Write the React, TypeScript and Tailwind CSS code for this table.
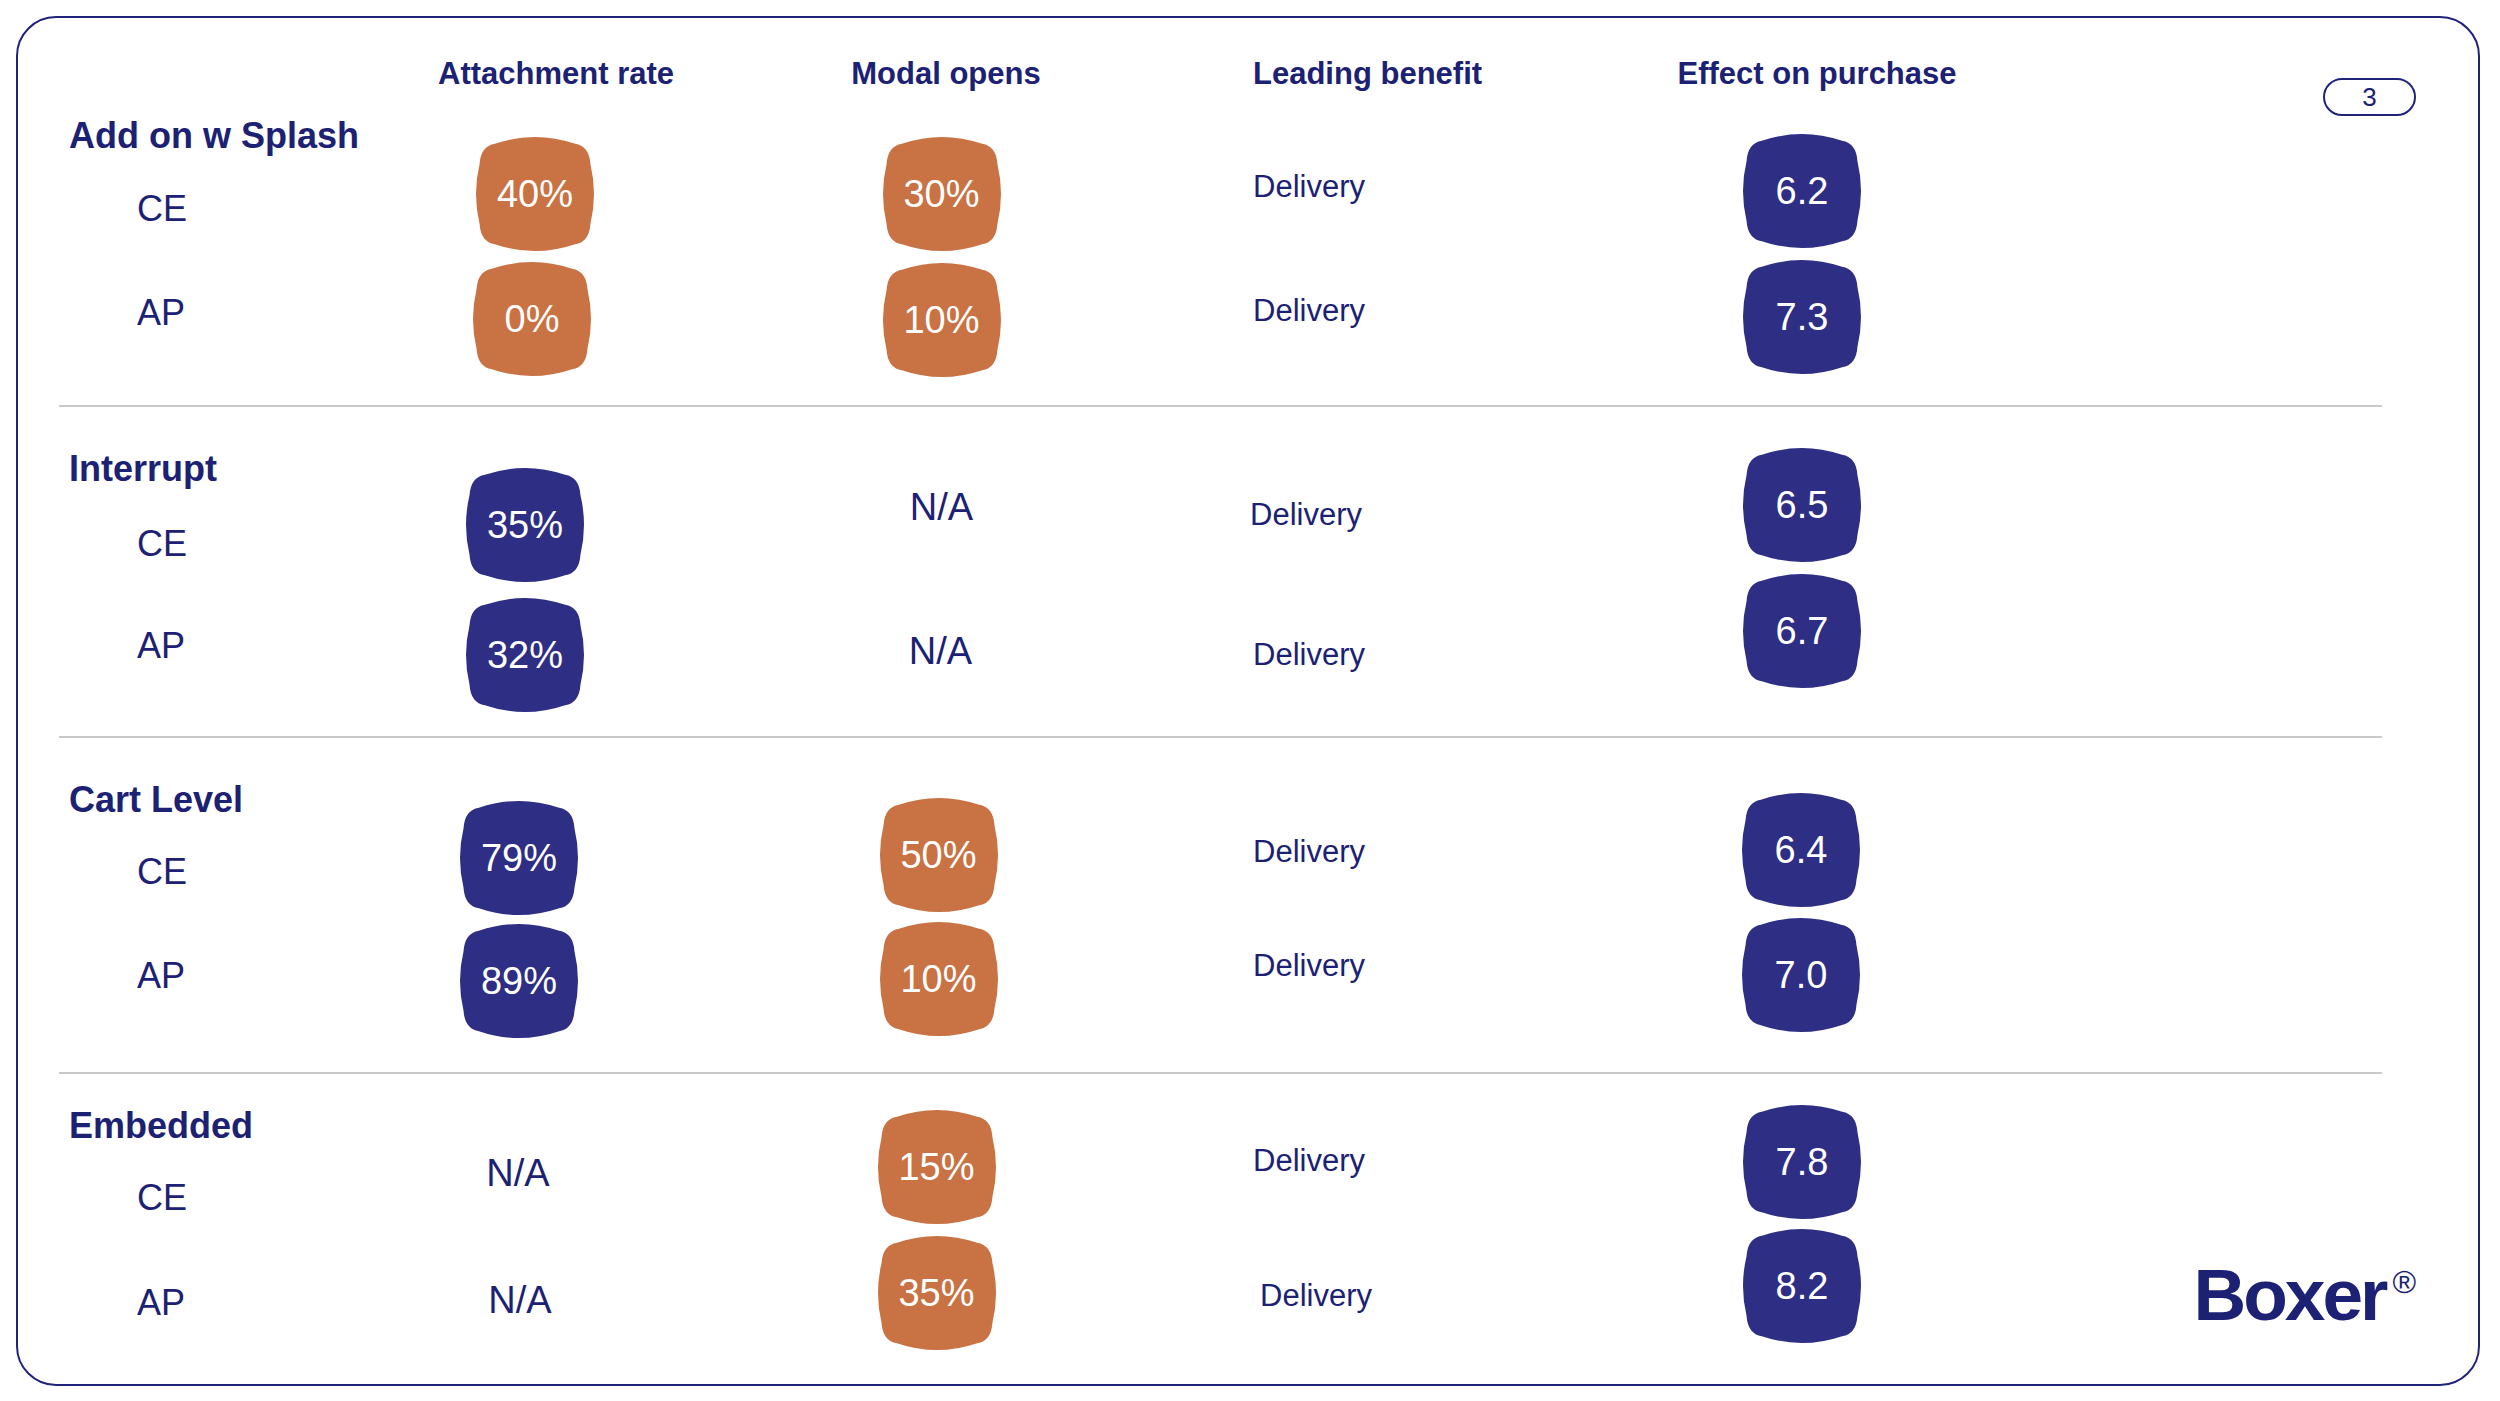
import React from "react";

type Tone = "orange" | "navy";

type Cell =
  | { kind: "pill"; tone: Tone; value: string; cls: string }
  | { kind: "na"; value: string; cls: string }
  | { kind: "delivery"; value: string; cls: string };

type Section = {
  title: string;
  height: string;
  labels: [string, string, string];
  attach: [Cell, Cell];
  modal: [Cell, Cell];
  benefit: [Cell, Cell];
  effect: [Cell, Cell];
  logo?: boolean;
};

const PILL_PATH =
  "M16 6 Q50 -6 84 6 Q96 8 97 24 Q103 50 97 76 Q96 92 84 94 Q50 106 16 94 Q4 92 3 76 Q-3 50 3 24 Q4 8 16 6 Z";

const sections: Section[] = [
  {
    title: "Add on w Splash",
    height: "h-[305px]",
    labels: ["mt-[14px]", "mt-[29px]", "mt-[60px]"],
    attach: [
      { kind: "pill", tone: "orange", value: "40%", cls: "mt-[37px] ml-[20px]" },
      { kind: "pill", tone: "orange", value: "0%", cls: "mt-[11px] ml-[14px]" },
    ],
    modal: [
      { kind: "pill", tone: "orange", value: "30%", cls: "mt-[37px] ml-[10px]" },
      { kind: "pill", tone: "orange", value: "10%", cls: "mt-[12px] ml-[10px]" },
    ],
    benefit: [
      { kind: "delivery", value: "Delivery", cls: "mt-[67px]" },
      { kind: "delivery", value: "Delivery", cls: "mt-[84px]" },
    ],
    effect: [
      { kind: "pill", tone: "navy", value: "6.2", cls: "mt-[34px]" },
      { kind: "pill", tone: "navy", value: "7.3", cls: "mt-[12px]" },
    ],
  },
  {
    title: "Interrupt",
    height: "h-[329px]",
    labels: ["mt-[40px]", "mt-[31px]", "mt-[58px]"],
    attach: [
      { kind: "pill", tone: "navy", value: "35%", cls: "mt-[61px]" },
      { kind: "pill", tone: "navy", value: "32%", cls: "mt-[16px]" },
    ],
    modal: [
      { kind: "na", value: "N/A", cls: "mt-[80px] ml-[10px]" },
      { kind: "na", value: "N/A", cls: "mt-[104px] ml-[8px]" },
    ],
    benefit: [
      { kind: "delivery", value: "Delivery", cls: "mt-[88px] -ml-[3px]" },
      { kind: "delivery", value: "Delivery", cls: "mt-[100px]" },
    ],
    effect: [
      { kind: "pill", tone: "navy", value: "6.5", cls: "mt-[41px]" },
      { kind: "pill", tone: "navy", value: "6.7", cls: "mt-[12px]" },
    ],
  },
  {
    title: "Cart Level",
    height: "h-[334px]",
    labels: ["mt-[40px]", "mt-[28px]", "mt-[60px]"],
    attach: [
      { kind: "pill", tone: "navy", value: "79%", cls: "mt-[63px] -ml-[12px]" },
      { kind: "pill", tone: "navy", value: "89%", cls: "mt-[9px] -ml-[12px]" },
    ],
    modal: [
      { kind: "pill", tone: "orange", value: "50%", cls: "mt-[60px] ml-[4px]" },
      { kind: "pill", tone: "orange", value: "10%", cls: "mt-[10px] ml-[4px]" },
    ],
    benefit: [
      { kind: "delivery", value: "Delivery", cls: "mt-[94px]" },
      { kind: "delivery", value: "Delivery", cls: "mt-[74px]" },
    ],
    effect: [
      { kind: "pill", tone: "navy", value: "6.4", cls: "mt-[55px] -ml-[2px]" },
      { kind: "pill", tone: "navy", value: "7.0", cls: "mt-[11px] -ml-[2px]" },
    ],
  },
  {
    title: "Embedded",
    height: "h-[310px]",
    labels: ["mt-[30px]", "mt-[28px]", "mt-[61px]"],
    attach: [
      { kind: "na", value: "N/A", cls: "mt-[79px] -ml-[14px]" },
      { kind: "na", value: "N/A", cls: "mt-[87px] -ml-[10px]" },
    ],
    modal: [
      { kind: "pill", tone: "orange", value: "15%", cls: "mt-[36px]" },
      { kind: "pill", tone: "orange", value: "35%", cls: "mt-[12px]" },
    ],
    benefit: [
      { kind: "delivery", value: "Delivery", cls: "mt-[67px]" },
      { kind: "delivery", value: "Delivery", cls: "mt-[95px] ml-[7px]" },
    ],
    effect: [
      { kind: "pill", tone: "navy", value: "7.8", cls: "mt-[31px]" },
      { kind: "pill", tone: "navy", value: "8.2", cls: "mt-[10px]" },
    ],
    logo: true,
  },
];

function Pill({ tone, value, className }: { tone: Tone; value: string; className: string }) {
  return (
    <div className={`relative flex h-[114px] w-[118px] shrink-0 items-center justify-center ${className}`}>
      <svg
        className={`absolute inset-0 h-full w-full overflow-visible ${
          tone === "orange" ? "fill-[#c97243]" : "fill-[#2d2e84]"
        }`}
        viewBox="0 0 100 100"
        preserveAspectRatio="none"
      >
        <path d={PILL_PATH} />
      </svg>
      <span className="relative text-[38px] leading-none text-white">{value}</span>
    </div>
  );
}

function ValueCell({ cell }: { cell: Cell }) {
  if (cell.kind === "pill") {
    return <Pill tone={cell.tone} value={cell.value} className={cell.cls} />;
  }
  if (cell.kind === "na") {
    return <div className={`text-[38px] leading-[40px] whitespace-nowrap ${cell.cls}`}>{cell.value}</div>;
  }
  return <div className={`text-[31px] leading-[40px] whitespace-nowrap ${cell.cls}`}>{cell.value}</div>;
}

function SectionRow({ section }: { section: Section }) {
  return (
    <div className={`flex ${section.height}`}>
      <div className="flex w-[371px] shrink-0 flex-col">
        <div className={`pl-[10px] text-[36px] font-bold leading-[44px] ${section.labels[0]}`}>
          {section.title}
        </div>
        <div className={`pl-[78px] text-[36px] leading-[44px] ${section.labels[1]}`}>CE</div>
        <div className={`pl-[78px] text-[36px] leading-[44px] ${section.labels[2]}`}>AP</div>
      </div>
      <div className="flex w-[190px] shrink-0 flex-col items-center">
        <ValueCell cell={section.attach[0]} />
        <ValueCell cell={section.attach[1]} />
      </div>
      <div className="flex w-[633px] shrink-0 flex-col items-center">
        <ValueCell cell={section.modal[0]} />
        <ValueCell cell={section.modal[1]} />
      </div>
      <div className="flex w-[437px] shrink-0 flex-col items-start">
        <ValueCell cell={section.benefit[0]} />
        <ValueCell cell={section.benefit[1]} />
      </div>
      <div className="flex w-[224px] shrink-0 flex-col items-center">
        <ValueCell cell={section.effect[0]} />
        <ValueCell cell={section.effect[1]} />
      </div>
      {section.logo && (
        <div className="ml-auto mt-[181px] flex items-start text-[#1c2174]">
          <span className="text-[73px] font-bold leading-[80px] tracking-[-3px]">Boxer</span>
          <span className="ml-[7px] mt-[11px] text-[32px] leading-none">®</span>
        </div>
      )}
    </div>
  );
}

function Divider() {
  return <div className="h-[2px] w-[2323px] shrink-0 bg-[#c9c9c9]" />;
}

export default function App() {
  return (
    <div className="h-[1401px] w-[2500px] bg-white p-[16px] font-['Liberation_Sans',Arial,sans-serif] text-[#1c2174]">
      <div className="flex h-[1370px] w-[2464px] flex-col overflow-hidden rounded-[40px] border-2 border-[#1f2479] pl-[41px] pr-[62px]">
        <header className="flex h-[82px] shrink-0 items-start">
          <div className="w-[371px] shrink-0" />
          <div className="flex w-[190px] shrink-0 justify-center">
            <div className="ml-[62px] mt-[36px] whitespace-nowrap text-[31px] font-bold leading-[40px]">
              Attachment rate
            </div>
          </div>
          <div className="flex w-[633px] shrink-0 justify-center">
            <div className="ml-[19px] mt-[36px] whitespace-nowrap text-[31px] font-bold leading-[40px]">
              Modal opens
            </div>
          </div>
          <div className="w-[437px] shrink-0">
            <div className="mt-[36px] whitespace-nowrap text-[31px] font-bold leading-[40px]">
              Leading benefit
            </div>
          </div>
          <div className="flex w-[224px] shrink-0 justify-center">
            <div className="ml-[30px] mt-[36px] whitespace-nowrap text-[31px] font-bold leading-[40px]">
              Effect on purchase
            </div>
          </div>
          <div className="ml-auto mt-[60px] flex h-[38px] w-[93px] shrink-0 items-center justify-center rounded-full border-2 border-[#1f2479] text-[26px] leading-none">
            3
          </div>
        </header>
        <SectionRow section={sections[0]} />
        <Divider />
        <SectionRow section={sections[1]} />
        <Divider />
        <SectionRow section={sections[2]} />
        <Divider />
        <SectionRow section={sections[3]} />
      </div>
    </div>
  );
}
